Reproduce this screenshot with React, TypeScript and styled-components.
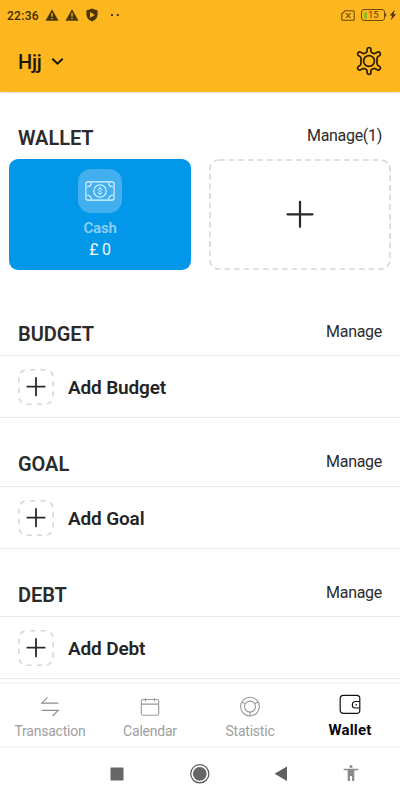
import React from 'react';
import styled, { createGlobalStyle } from 'styled-components';

const GlobalStyle = createGlobalStyle`
  * { box-sizing: border-box; }
  body { margin: 0; background: #fff; font-family: Roboto, "Liberation Sans", sans-serif; color: #2b2b2b; }
  svg { display: block; flex: none; }
  button { font: inherit; color: inherit; background: none; border: 0; padding: 0; margin: 0; }
`;

const Screen = styled.div`
  width: 400px;
  height: 800px;
  display: flex;
  flex-direction: column;
  overflow: hidden;
  background: #fff;
`;

const TopArea = styled.header`
  height: 92px;
  flex: none;
  background: #ffb71f;
  box-shadow: 0 1px 2px rgba(120, 90, 30, 0.2);
`;

const StatusBar = styled.div`
  height: 30px;
  display: flex;
  align-items: center;
  justify-content: space-between;
  padding: 0 3px 0 7px;
`;

const StatusGroup = styled.div<{ $gap: number }>`
  display: flex;
  align-items: center;
  gap: ${(p) => p.$gap}px;
`;

const Clock = styled.span`
  font-size: 12px;
  line-height: 14px;
  width: 32px;
  padding-top: 1px;
  letter-spacing: 0.3px;
  color: #3d2a00;
  font-weight: 500;
  white-space: nowrap;
`;

const AccountBar = styled.div`
  height: 62px;
  display: flex;
  align-items: center;
  justify-content: space-between;
  padding: 0 17px 0 18px;
`;

const AccountButton = styled.button`
  display: flex;
  align-items: center;
  gap: 9px;
  padding-top: 2px;
  font-size: 20px;
  line-height: 24px;
  font-weight: 500;
  letter-spacing: -0.2px;
  color: #1c1606;
`;

const Content = styled.main`
  height: 590px;
  flex: none;
  overflow: hidden;
`;

const SectionHeader = styled.div<{ $top: number; $height: number }>`
  height: ${(p) => p.$height}px;
  padding: ${(p) => p.$top}px 18px 0;
  display: flex;
  justify-content: space-between;
`;

const SectionTitle = styled.h2`
  margin: 0;
  font-size: 20px;
  line-height: 24px;
  font-weight: 600;
  letter-spacing: -0.05px;
  color: #2b2b2b;
`;

const ManageButton = styled.button`
  height: 20px;
  font-size: 16px;
  line-height: 20px;
  letter-spacing: -0.3px;
  color: #2b2b2b;
`;

const WalletGrid = styled.div`
  display: grid;
  grid-template-columns: 182px 182px;
  gap: 18px;
  padding: 0 9px;
  height: 111px;
`;

const WalletCard = styled.div`
  display: flex;
  flex-direction: column;
  align-items: center;
  border-radius: 9px;
  background: #0297e9;
  padding-top: 10px;
`;

const CashTile = styled.div`
  width: 44px;
  height: 44px;
  border-radius: 13px;
  background: #42b0ee;
  display: grid;
  place-items: center;
`;

const WalletName = styled.div`
  margin-top: 5px;
  font-size: 15px;
  line-height: 20px;
  font-weight: 600;
  letter-spacing: -0.2px;
  color: #8fd0f6;
`;

const WalletAmount = styled.div`
  margin-top: 2px;
  font-size: 16px;
  line-height: 20px;
  letter-spacing: -0.3px;
  color: #f1fbff;
`;

const AddWallet = styled.button`
  width: 182px;
  height: 111px;
`;

const AddRow = styled.button`
  width: 100%;
  height: 63px;
  display: flex;
  align-items: center;
  gap: 13px;
  padding: 1px 17px 0;
  border-top: 1px solid #ebebeb;
  border-bottom: 1px solid #e8e8e8;
  font-size: 19px;
  font-weight: 600;
  letter-spacing: -0.15px;
  color: #242424;
`;

const TabBar = styled.nav`
  height: 66px;
  flex: none;
  display: grid;
  grid-template-columns: repeat(4, 1fr);
  border-top: 2px solid #f6f6f6;
  border-bottom: 2px solid #f6f6f6;
`;

const Tab = styled.button<{ $active?: boolean }>`
  display: flex;
  flex-direction: column;
  align-items: center;
  justify-content: flex-start;
  padding-top: ${(p) => (p.$active ? 9 : 11)}px;
  gap: ${(p) => (p.$active ? 5 : 4)}px;
  font-size: ${(p) => (p.$active ? 15 : 14)}px;
  line-height: 20px;
  letter-spacing: ${(p) => (p.$active ? 0.15 : -0.22)}px;
  font-weight: ${(p) => (p.$active ? 700 : 400)};
  color: ${(p) => (p.$active ? '#080808' : '#a0a0a0')};
`;

const SystemBar = styled.div`
  flex: 1;
  display: flex;
  align-items: center;
  gap: 67px;
  padding-left: 107px;
`;

const Warning = () => (
  <svg width="14" height="13" viewBox="0 0 14 13">
    <path d="M7 .2 13.5 11.8H.5Z" fill="#4b3605" />
    <path d="M7 4v3.8M7 8.9v1.4" stroke="#e2a323" strokeWidth="1.5" />
  </svg>
);

const Shield = () => (
  <svg width="14" height="14" viewBox="0 0 14 14">
    <path d="M7 .4 12.6 2.4v4.2c0 3.3-2.2 5.7-5.6 7-3.4-1.3-5.6-3.7-5.6-7V2.4Z" fill="#4b3605" />
    <path d="m5 4 5 2.9-5 2.9Z" fill="#f5b22a" />
  </svg>
);

const DotsSlot = styled.div`
  margin-left: 5px;
`;

const Dots = () => (
  <svg width="10" height="4" viewBox="0 0 10 4">
    <path d="M1 1h2v2H1ZM6.8 1h2v2h-2Z" fill="#4b3605" />
  </svg>
);

const SimIcon = () => (
  <svg width="14" height="11" viewBox="0 0 14 11" fill="none" stroke="#6b4b08">
    <path d="M4 .8h8.2q1 0 1 1v7.4q0 1-1 1H1.8q-1 0-1-1V4Z" strokeWidth="1.1" />
    <path d="m5.1 3.2 4.4 4.6m0-4.6L5.1 7.8" strokeWidth="1.1" />
  </svg>
);

const Battery = styled.div`
  width: 24px;
  height: 12px;
  margin-left: 6px;
  border: 1px solid #6b4b08;
  border-radius: 3px;
  display: flex;
  align-items: center;
  padding-left: 2px;
  gap: 1px;
  font-size: 9.5px;
  line-height: 10px;
  color: #5c4108;
`;

const BatteryLevel = styled.span`
  width: 3px;
  height: 7px;
  border-radius: 1px;
  background: #8dbb22;
`;

const Charging = () => (
  <svg width="12" height="12" viewBox="0 0 12 12">
    <path d="M0 4.5h1.3v3H0Z" fill="#6b4b08" />
    <path d="M9.8.8 4.6 6.6h2.6l-1.4 4.6 5.4-6H8.6Z" fill="#4b3605" />
  </svg>
);

const Chevron = () => (
  <svg width="14" height="10" viewBox="0 0 14 10">
    <path d="M1.3 1.8 6.5 6.7l5.2-4.9" fill="none" stroke="#1c1606" strokeWidth="2" />
  </svg>
);

const Gear = () => (
  <svg width="28" height="30" viewBox="0 0 28 30" fill="none" stroke="#2a1d00" strokeWidth="1.7" strokeLinejoin="round">
    <circle cx="14" cy="15" r="5.4" />
    <path d="M12.1 3.4a1.9 1.9 0 0 1 3.8 0v1.5q0 1.2 1.2 1.8l1.1.6q1.1.6 2.1 0l1.9-1.1a2.1 2.1 0 0 1 2.9.7 2.1 2.1 0 0 1-.8 2.9l-1.2.7q-1.1.7-1.1 1.9v5.2q0 1.2 1.1 1.9l1.2.7a2.1 2.1 0 0 1 .8 2.9 2.1 2.1 0 0 1-2.9.7l-1.9-1.1q-1-.6-2.1 0l-1.1.6q-1.2.6-1.2 1.8v1.5a1.9 1.9 0 0 1-3.8 0v-1.5q0-1.2-1.2-1.8l-1.1-.6q-1.1-.6-2.1 0l-1.9 1.1a2.1 2.1 0 0 1-2.9-.7 2.1 2.1 0 0 1 .8-2.9l1.2-.7Q6 18.8 6 17.6v-5.2q0-1.2-1.1-1.9l-1.2-.7a2.1 2.1 0 0 1-.8-2.9 2.1 2.1 0 0 1 2.9-.7l1.9 1.1q1 .6 2.1 0l1.1-.6q1.2-.6 1.2-1.8Z" />
  </svg>
);

const Banknote = () => (
  <svg width="30" height="20" viewBox="0 0 30 20" fill="none" stroke="#e3f5ff" strokeWidth="1.1" strokeLinecap="round">
    <rect x=".9" y=".9" width="28.2" height="18.2" rx="2" />
    <path d="M2.2 5.8q3.8-.2 4.2-3.7M27.8 5.8q-3.8-.2-4.2-3.7M2.2 14.2q3.8.2 4.2 3.7M27.8 14.2q-3.8.2-4.2 3.7" />
    <circle cx="15" cy="10" r="6.2" />
    <path d="M16.8 8.5q-.4-1.1-1.8-1.1c-2.2 0-2.3 2.2 0 2.6s2.3 2.6 0 2.6q-1.4 0-1.8-1.1M15 6.3v1.1m0 5.2v1.1" strokeWidth="1" />
  </svg>
);

const DashedCard = () => (
  <svg width="182" height="111" viewBox="0 0 182 111" fill="none">
    <rect x="1" y="1" width="180" height="109" rx="9" stroke="#d8d8d8" strokeWidth="1.7" strokeDasharray="5.7 3.9" />
    <path d="M78.5 55.3h25M91 42.8v25" stroke="#292929" strokeWidth="2.2" strokeLinecap="round" />
  </svg>
);

const DashedPlus = () => (
  <svg width="38" height="38" viewBox="0 0 38 38" fill="none">
    <rect x="1.8" y="1.8" width="34.4" height="34.4" rx="8" stroke="#d6d6d6" strokeWidth="1.6" strokeDasharray="5 5.25" strokeDashoffset="-3.5" />
    <path d="M10.3 18.7h17.4M19 10v17.4" stroke="#292929" strokeWidth="1.8" strokeLinecap="round" />
  </svg>
);

const TransferIcon = () => (
  <svg width="20" height="22" viewBox="0 0 20 22" fill="none" stroke="#8c8c8c" strokeWidth="1.1">
    <path d="M18.4 8.1H1.8l5.7-5.7M1.6 15.4h16.6l-5.7 5.6" />
  </svg>
);

const CalendarIcon = () => (
  <svg width="20" height="22" viewBox="0 0 20 22" fill="none" stroke="#999" strokeWidth="1.1">
    <rect x="1.3" y="4.5" width="17.4" height="15.7" rx="1.8" />
    <path d="M1.3 9.1h17.4M5.4 3.2v3.4m9.1-3.4v3.4" />
  </svg>
);

const StatisticIcon = () => (
  <svg width="22" height="22" viewBox="0 0 22 22" fill="none" stroke="#999" strokeWidth="1.1">
    <circle cx="11" cy="11.6" r="9.4" />
    <circle cx="11" cy="11.6" r="5.5" />
    <path d="M11 17.1V21M6.2 8.9 2.9 6.8m12.9 2.1 3.3-2.1" />
  </svg>
);

const WalletIcon = () => (
  <svg width="22" height="22" viewBox="0 0 22 22" fill="none" stroke="#111" strokeWidth="1.2">
    <rect x="1.2" y="2.4" width="19.6" height="18" rx="3.2" />
    <path d="M20.8 8.5h-4.2a3.2 3.2 0 0 0 0 6.5h4.2" />
    <circle cx="17.2" cy="11.7" r=".8" fill="#111" stroke="none" />
  </svg>
);

const Recents = () => (
  <svg width="20" height="20" viewBox="0 0 20 20"><path d="M3.5 3.5h13v13h-13z" fill="#666" /></svg>
);

const Home = () => (
  <svg width="20" height="20" viewBox="0 0 20 20">
    <circle cx="9.8" cy="9.8" r="9.1" fill="none" stroke="#555" strokeWidth="1.2" />
    <circle cx="9.8" cy="9.8" r="6.9" fill="#666" />
  </svg>
);

const BackTriangle = () => (
  <svg width="14" height="16" viewBox="0 0 14 16"><path d="M13 .5v14.4L.6 7.7Z" fill="#5f5f5f" /></svg>
);

const Accessibility = () => (
  <svg width="16" height="18" viewBox="0 0 16 18" fill="#8b8b8b">
    <circle cx="8" cy="1.6" r="1.5" />
    <path d="M.7 3.7h14.6v1.5h-4v10.8H9v-5H7v5H4.7V5.2h-4Z" />
  </svg>
);

const SystemKeys = styled.div`
  display: flex;
  gap: 55px;
  align-items: center;
`;

const HomeSlot = styled.div`
  margin-right: -3px;
  margin-left: -4px;
`;

const Section = ({ title, item, top, height }: { title: string; item: string; top: number; height: number }) => (
  <section>
    <SectionHeader $top={top} $height={height}>
      <SectionTitle>{title}</SectionTitle>
      <ManageButton>Manage</ManageButton>
    </SectionHeader>
    <AddRow><DashedPlus />{item}</AddRow>
  </section>
);

export default function App() {
  return (
    <>
      <GlobalStyle />
      <Screen>
        <TopArea>
          <StatusBar>
            <StatusGroup $gap={6}>
              <Clock>22:36</Clock><Warning /><Warning /><Shield /><DotsSlot><Dots /></DotsSlot>
            </StatusGroup>
            <StatusGroup $gap={0}>
              <SimIcon /><Battery><BatteryLevel />15</Battery><Charging />
            </StatusGroup>
          </StatusBar>
          <AccountBar>
            <AccountButton>Hjj<Chevron /></AccountButton>
            <Gear />
          </AccountBar>
        </TopArea>
        <Content>
          <section>
            <SectionHeader $top={34} $height={67}>
              <SectionTitle>WALLET</SectionTitle>
              <ManageButton>Manage(1)</ManageButton>
            </SectionHeader>
            <WalletGrid>
              <WalletCard>
                <CashTile><Banknote /></CashTile>
                <WalletName>Cash</WalletName>
                <WalletAmount>£ 0</WalletAmount>
              </WalletCard>
              <AddWallet aria-label="Add wallet"><DashedCard /></AddWallet>
            </WalletGrid>
          </section>
          <Section title="BUDGET" item="Add Budget" top={52} height={85} />
          <Section title="GOAL" item="Add Goal" top={34} height={68} />
          <Section title="DEBT" item="Add Debt" top={34} height={67} />
        </Content>
        <TabBar>
          <Tab><TransferIcon />Transaction</Tab>
          <Tab><CalendarIcon />Calendar</Tab>
          <Tab><StatisticIcon />Statistic</Tab>
          <Tab $active><WalletIcon />Wallet</Tab>
        </TabBar>
        <SystemBar>
          <Recents />
          <HomeSlot><Home /></HomeSlot>
          <SystemKeys><BackTriangle /><Accessibility /></SystemKeys>
        </SystemBar>
      </Screen>
    </>
  );
}
